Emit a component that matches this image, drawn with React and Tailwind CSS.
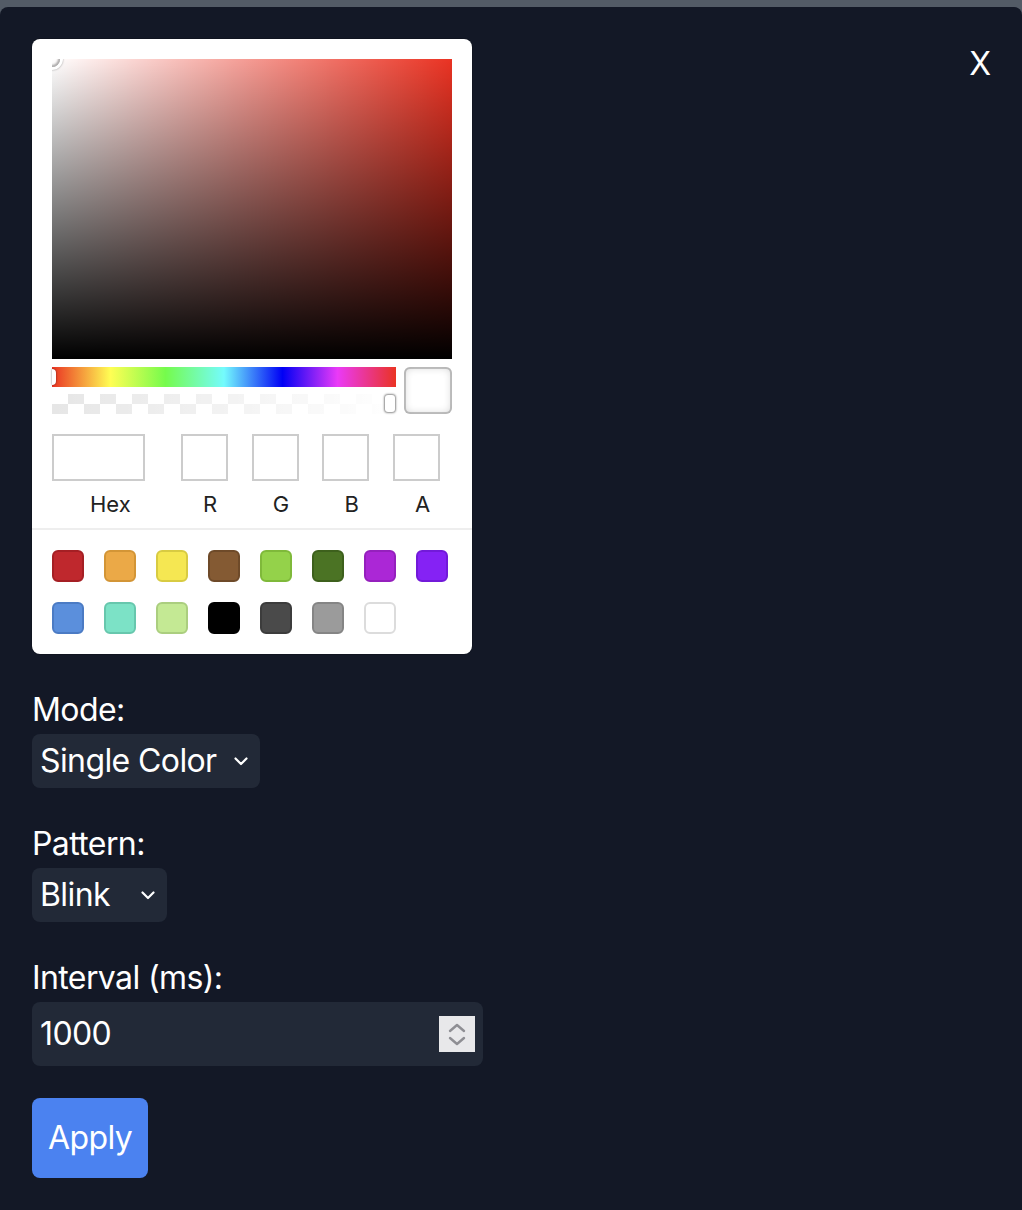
import React from 'react';

// ────────────────────────────────────────────────────────────
// Sketch-style colour picker (drawn at 2x)
// ────────────────────────────────────────────────────────────

const PRESETS = [
  ['#bf282d', '#a51f24'],
  ['#eba947', '#d39536'],
  ['#f5e752', '#d8cb42'],
  ['#845a33', '#6e4a29'],
  ['#94d24a', '#7fb93a'],
  ['#4b7324', '#3d601c'],
  ['#ab27d6', '#9520bd'],
  ['#8522f4', '#721ad9'],
  ['#5b8fdc', '#4b7bc4'],
  ['#7ce2c6', '#67c7ad'],
  ['#c4e994', '#abce7f'],
  ['#000000', '#000000'],
  ['#4a4a4a', '#3c3c3c'],
  ['#9b9b9b', '#858585'],
  ['#ffffff', '#dcdcdc'],
];

const HUE =
  'linear-gradient(to right, #ea3323 0%, #fffe54 17%, #75fb4c 33%, #74fbfd 50%, #0000f5 67%, #ea3af7 83%, #ea3323 100%)';

const Field = ({ label, wide }) => (
  <div className={wide ? 'w-[117px] flex flex-col' : 'w-[71px] pl-[12px] flex flex-col'}>
    <div className="w-[80%] h-[47px] bg-white border-2 border-[#cccccc]" />
    <div className="pt-[8px] text-center text-[22px] leading-[30px] text-[#222222]">{label}</div>
  </div>
);

const ColorPicker = () => (
  <div className="w-[440px] bg-white rounded-lg pt-5 px-5 shadow-[0_0_0_1px_rgba(0,0,0,0.15)]">
    {/* Saturation */}
    <div className="relative w-[400px] h-[300px] bg-[#ea3323] overflow-hidden">
      <div className="absolute inset-0 bg-[linear-gradient(to_right,#ffffff,rgba(255,255,255,0))]" />
      <div className="absolute inset-0 bg-[linear-gradient(to_bottom,rgba(0,0,0,0),#000000)]" />
      <div className="absolute -left-[8px] -top-[8px] w-[16px] h-[16px] rounded-full shadow-[0_0_0_3px_#fff,inset_0_0_2px_2px_rgba(0,0,0,0.3),0_0_2px_3px_rgba(0,0,0,0.4)]" />
    </div>

    {/* Sliders + preview */}
    <div className="flex mt-2 gap-2">
      <div className="flex-1 flex flex-col gap-[7px]">
        <div className="relative h-5" style={{ background: HUE }}>
          <div className="absolute left-0 top-[2px] w-[4px] h-[16px] rounded-r-sm bg-white shadow-[0_0_2px_rgba(0,0,0,0.6)]" />
        </div>
        <div className="relative h-5 bg-[repeating-conic-gradient(#e6e6e6_0%_25%,#ffffff_0%_50%)] bg-[length:32px_20px]">
          <div className="absolute inset-0 bg-[linear-gradient(to_right,rgba(255,255,255,0),#ffffff)]" />
          <div className="absolute right-[1px] top-[1px] w-[10px] h-[17px] rounded-[3px] bg-white shadow-[0_0_2px_1px_rgba(0,0,0,0.45)]" />
        </div>
      </div>
      <div className="w-[48px] h-[47px] rounded-md bg-white shadow-[inset_0_0_0_2px_rgba(0,0,0,0.2),inset_0_0_8px_rgba(0,0,0,0.2)]" />
    </div>

    {/* Inputs */}
    <div className="flex pt-5 pb-[9px]">
      <Field label="Hex" wide />
      <Field label="R" />
      <Field label="G" />
      <Field label="B" />
      <Field label="A" />
    </div>

    {/* Presets */}
    <div className="-mx-5 px-5 pt-5 border-t-2 border-[#eeeeee] flex flex-wrap gap-x-5 gap-y-5 pb-5">
      {PRESETS.map(([fill, edge]) => (
        <div
          key={fill}
          className="w-8 h-8 rounded-md border-2"
          style={{ background: fill, borderColor: edge }}
        />
      ))}
    </div>
  </div>
);

const Chevron = () => (
  <svg width="14" height="9" viewBox="0 0 14 9" fill="none" stroke="white" strokeWidth="2.2" strokeLinecap="round" strokeLinejoin="round">
    <path d="M1.5 1.5l5.5 5.5 5.5-5.5" />
  </svg>
);

const Select = ({ value, width }) => (
  <div className={`${width} h-[54px] rounded-lg bg-[#222937] flex items-center pl-2 pr-[12px] justify-between`}>
    <span className="text-[32px] leading-none tracking-[-0.6px] text-white">{value}</span>
    <Chevron />
  </div>
);

// ────────────────────────────────────────────────────────────
// Page
// ────────────────────────────────────────────────────────────

export default function App() {
  return (
    <div
      className="min-h-[1210px] bg-[#535b66] pt-[7px]"
      style={{ fontFamily: 'Inter, "Open Sans", sans-serif' }}
    >
      <div className="relative min-h-[1203px] bg-[#131826] rounded-t-lg p-8">
        <button className="absolute right-[31px] top-[33px] text-white text-[32px] leading-[48px]">X</button>

        <ColorPicker />

        <div className="mt-8 text-white text-[32px] leading-[48px] tracking-[-0.6px]">Mode:</div>
        <Select value="Single Color" width="w-[228px]" />

        <div className="mt-8 text-white text-[32px] leading-[48px] tracking-[-0.6px]">Pattern:</div>
        <Select value="Blink" width="w-[135px]" />

        <div className="mt-8 text-white text-[32px] leading-[48px] tracking-[-0.6px]">Interval (ms):</div>
        <div className="w-[451px] h-[64px] rounded-lg bg-[#222937] flex items-center pl-2 pr-2 justify-between">
          <span className="text-[32px] leading-none tracking-[-0.6px] text-white">1000</span>
          <div className="w-[36px] h-[36px] bg-[#e8e8ea] flex flex-col items-center justify-center gap-[3px]">
            <svg width="18" height="10" viewBox="0 0 18 10" fill="none" stroke="#8e8e93" strokeWidth="2.4" strokeLinecap="round" strokeLinejoin="round">
              <path d="M2 8l7-6 7 6" />
            </svg>
            <svg width="18" height="10" viewBox="0 0 18 10" fill="none" stroke="#8e8e93" strokeWidth="2.4" strokeLinecap="round" strokeLinejoin="round">
              <path d="M2 2l7 6 7-6" />
            </svg>
          </div>
        </div>

        <button className="mt-8 h-[80px] px-4 rounded-lg bg-[#4b82f0] text-white text-[32px] leading-none tracking-[-0.6px]">
          Apply
        </button>
      </div>
    </div>
  );
}
